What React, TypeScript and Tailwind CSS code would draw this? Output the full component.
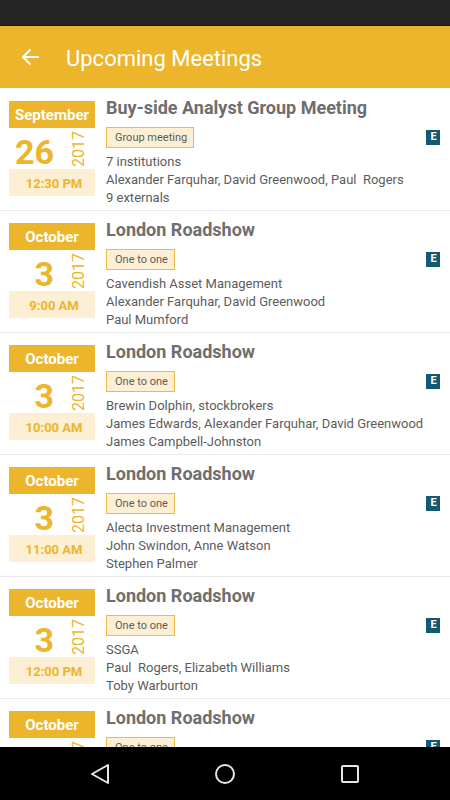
type Meeting = {
  month: string;
  day: string;
  time: string;
  title: string;
  kind: string;
  lines: string[];
};

const meetings: Meeting[] = [
  {
    month: "September",
    day: "26",
    time: "12:30 PM",
    title: "Buy-side Analyst Group Meeting",
    kind: "Group meeting",
    lines: ["7 institutions", "Alexander Farquhar, David Greenwood, Paul  Rogers", "9 externals"],
  },
  {
    month: "October",
    day: "3",
    time: "9:00 AM",
    title: "London Roadshow",
    kind: "One to one",
    lines: ["Cavendish Asset Management", "Alexander Farquhar, David Greenwood", "Paul Mumford"],
  },
  {
    month: "October",
    day: "3",
    time: "10:00 AM",
    title: "London Roadshow",
    kind: "One to one",
    lines: [
      "Brewin Dolphin, stockbrokers",
      "James Edwards, Alexander Farquhar, David Greenwood",
      "James Campbell-Johnston",
    ],
  },
  {
    month: "October",
    day: "3",
    time: "11:00 AM",
    title: "London Roadshow",
    kind: "One to one",
    lines: ["Alecta Investment Management", "John Swindon, Anne Watson", "Stephen Palmer"],
  },
  {
    month: "October",
    day: "3",
    time: "12:00 PM",
    title: "London Roadshow",
    kind: "One to one",
    lines: ["SSGA", "Paul  Rogers, Elizabeth Williams", "Toby Warburton"],
  },
  {
    month: "October",
    day: "",
    time: "",
    title: "London Roadshow",
    kind: "One to one",
    lines: [],
  },
];

function DateCard({ month, day, time }: Pick<Meeting, "month" | "day" | "time">) {
  return (
    <div className="mt-3 w-[86px] shrink-0 font-bold text-[#edb52b]">
      <div className="flex h-[27px] items-center justify-center bg-[#edb52b] pt-0.5 text-[15px] text-white">
        {month}
      </div>
      <div className="flex h-[41px] items-center justify-end">
        <span className="pt-1.5 text-[34px] leading-none">{day}</span>
        <span className="mr-2 ml-[17px] rotate-180 text-base leading-4 font-normal [writing-mode:vertical-rl]">
          2017
        </span>
      </div>
      <div className="flex h-[27px] items-center justify-center bg-[#fcefd3] pt-0.5 pl-1 text-[13px]">
        {time}
      </div>
    </div>
  );
}

function MeetingRow({ meeting }: { meeting: Meeting }) {
  return (
    <li className="flex h-[122px] shrink-0 gap-[11px] border-t border-[#e9e9e9] pr-2.5 pl-[9px] first:border-transparent">
      <DateCard month={meeting.month} day={meeting.day} time={meeting.time} />
      <div className="min-w-0 flex-1 pt-2 text-[#5c5c5c]">
        <h2 className="text-lg leading-[22px] font-bold text-[#6e6e6e]">{meeting.title}</h2>
        <div className="mt-2 flex items-center justify-between">
          <span className="flex h-[21px] items-center border border-[#edbb45] bg-[#fcefd3] pt-0.5 pr-1.5 pl-2 text-[11px]">
            {meeting.kind}
          </span>
          <span className="flex h-[15px] w-3.5 items-center justify-center bg-[#135a70] pl-px text-[11px] font-bold text-white">
            E
          </span>
        </div>
        <div className="mt-[5px] text-[13px] leading-[18px] whitespace-pre">
          {meeting.lines.map((line) => (
            <p key={line}>{line}</p>
          ))}
        </div>
      </div>
    </li>
  );
}

export default function App() {
  return (
    <div className="flex h-screen flex-col overflow-hidden bg-white font-[Roboto,sans-serif]">
      <div className="h-[26px] shrink-0 border-b border-[#1b1a14] bg-[#262626]" />
      <header className="flex h-[62px] shrink-0 items-center bg-[#edb52b] pl-5 text-white">
        <button aria-label="Back" className="flex">
          <svg width="20" height="18" viewBox="0 0 20 18" fill="none" stroke="currentColor" strokeWidth="2">
            <path d="M19 9H3M10.500 1.500L3 9l7.500 7.500" />
          </svg>
        </button>
        <h1 className="ml-[26px] pt-0.5 text-[22px]">Upcoming Meetings</h1>
      </header>
      <ul className="flex min-h-0 flex-1 flex-col overflow-hidden">
        {meetings.map((meeting, index) => (
          <MeetingRow key={index} meeting={meeting} />
        ))}
      </ul>
      <nav className="grid h-[53px] shrink-0 grid-cols-3 items-center bg-black px-[37px] text-[#e6e6e6]">
        <button aria-label="Back" className="flex justify-center">
          <svg width="22" height="22" viewBox="0 0 22 22" fill="none" stroke="currentColor" strokeWidth="2" strokeLinejoin="round">
            <path d="M19 2v18L3 11z" />
          </svg>
        </button>
        <button aria-label="Home" className="flex justify-center">
          <svg width="22" height="22" viewBox="0 0 22 22" fill="none" stroke="currentColor" strokeWidth="2">
            <circle cx="11" cy="11" r="9" />
          </svg>
        </button>
        <button aria-label="Overview" className="flex justify-center">
          <svg width="22" height="22" viewBox="0 0 22 22" fill="none" stroke="currentColor" strokeWidth="2">
            <rect x="3" y="3" width="16" height="16" rx="1" />
          </svg>
        </button>
      </nav>
    </div>
  );
}
